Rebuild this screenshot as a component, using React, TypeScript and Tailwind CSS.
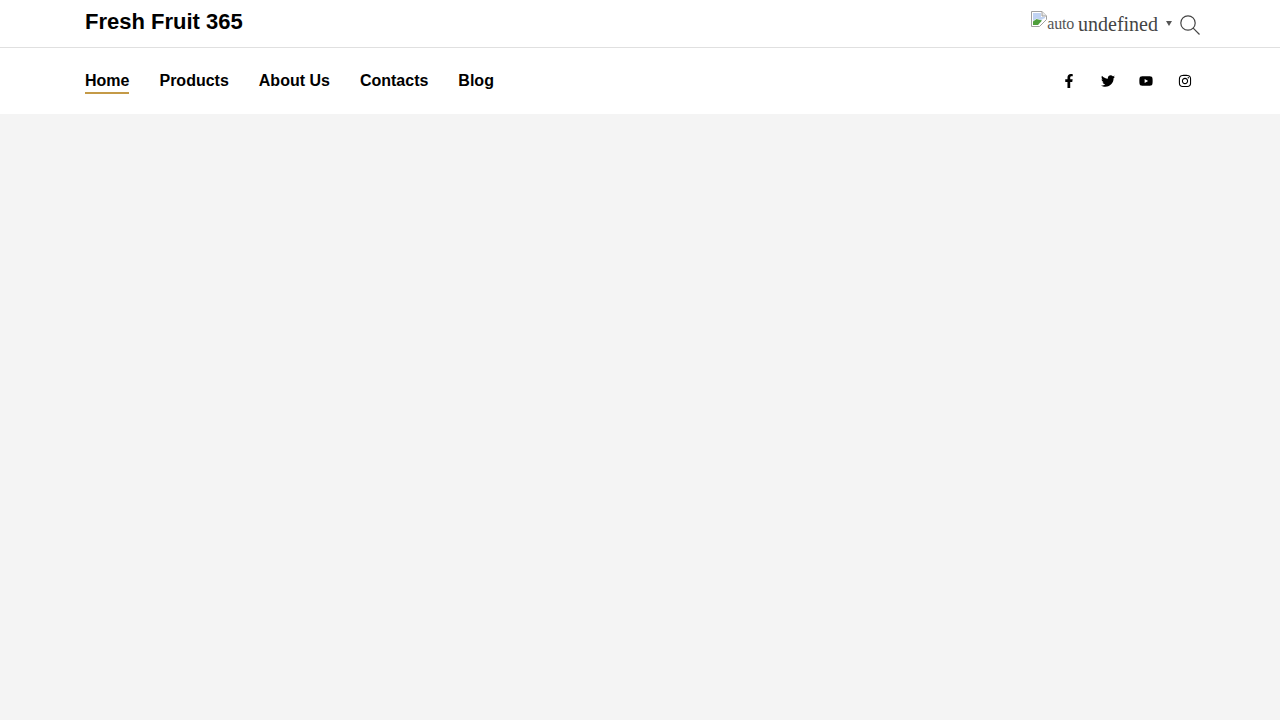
import { FaFacebookF, FaTwitter, FaYoutube, FaInstagram } from "react-icons/fa";

const navItems = ["Home", "Products", "About Us", "Contacts", "Blog"];

const BrokenImage = () => (
  <svg width="16" height="16" viewBox="0 0 16 16" className="mb-[4px] shrink-0">
    <path d="M0.5 0.5H11L15.5 5V8.5L8.5 15.5H0.5Z" fill="#fff" stroke="#a0a0a0" />
    <path d="M11 0.5V5H15.5" fill="#e8e8e8" stroke="#a0a0a0" />
    <path d="M2 2H10V6H14V7L10 9L5.5 7.5L2 10Z" fill="#c0d2f2" />
    <path d="M2 14V10.5L5.5 8L11 9.5L7 14Z" fill="#4f9f3c" />
  </svg>
);

const App = () => {
  return (
    <div className="min-h-[720px] bg-[#f4f4f4] font-['Liberation_Sans',sans-serif]">
      <header className="bg-white">
        <div className="h-12 border-b border-[#e0e0e0]">
          <div className="flex h-[47px] justify-between pl-[85px] pr-[79px]">
            <h1 className="mt-[6px] text-[22px] leading-[31px] font-bold text-black">
              Fresh Fruit 365
            </h1>
            <div className="flex items-start text-[#444] font-['Liberation_Serif',serif]">
              <span className="mt-[11px] flex items-end">
                <BrokenImage />
                <span className="text-[16px] leading-[15px] tracking-[-0.2px] text-[#555]">auto</span>
              </span>
              <span className="ml-[4px] mt-[11px] text-[20px] leading-[26px]">undefined</span>
              <span className="ml-[8px] mt-[21px] h-0 w-0 border-x-[3px] border-t-[5px] border-x-transparent border-t-[#555]" />
              <svg
                width="22"
                height="22"
                viewBox="0 0 22 22"
                fill="none"
                stroke="#444"
                strokeWidth="1.2"
                className="ml-[7px] mt-[14px]"
              >
                <circle cx="9" cy="9" r="7.2" />
                <path d="M14.2 14.2L20.5 20.5" />
              </svg>
            </div>
          </div>
        </div>
        <div className="flex h-[66px] items-center justify-between pl-[85px] pr-[88px]">
          <nav className="flex items-end gap-[30px]">
            {navItems.map((item, i) => (
              <a
                key={item}
                href="#"
                className={
                  i === 0
                    ? "border-b-2 border-[#c49a47] pt-[2px] text-[16px] leading-[22px] font-bold text-black"
                    : "pt-[2px] pb-[2px] text-[16px] leading-[22px] font-bold text-black"
                }
              >
                {item}
              </a>
            ))}
          </nav>
          <div className="flex items-center text-[14px] text-black">
            <FaFacebookF />
            <FaTwitter className="ml-[25px]" />
            <FaYoutube className="ml-[24px]" />
            <FaInstagram className="ml-[25px]" />
          </div>
        </div>
      </header>
    </div>
  );
};

export default App;
